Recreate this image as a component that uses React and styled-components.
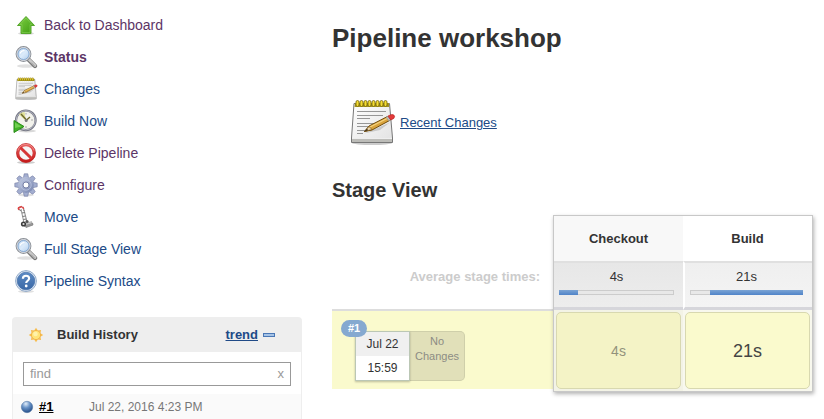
import React, { useId } from "react";
import styled, { createGlobalStyle } from "styled-components";

const GlobalStyle = createGlobalStyle`
  *, *::before, *::after { box-sizing: border-box; }
  body {
    margin: 0;
    background: #fff;
    color: #333;
    font-family: "Liberation Sans", Arial, Helvetica, sans-serif;
    font-size: 13px;
    line-height: 16px;
  }
`;

const Page = styled.div`
  display: grid;
  grid-template-columns: minmax(220px, 290px) minmax(0, 1fr);
  column-gap: 30px;
  padding: 9px 11px 0 12px;
`;

const Sidebar = styled.aside`
  display: flex;
  flex-direction: column;
  gap: 20px;
`;

const TaskList = styled.ul`
  list-style: none;
  margin: 0;
  padding: 0;
`;

const TaskLink = styled.a`
  display: flex;
  align-items: center;
  gap: 6px;
  height: 32px;
  padding-left: 2px;
  font-size: 14px;
  text-decoration: none;
  color: ${(p) => (p.$visited ? "#5c3566" : "#204a87")};
  font-weight: ${(p) => (p.$current ? "bold" : "normal")};
`;

const Icon = styled.svg`
  flex: none;
  display: block;
  width: ${(p) => p.$size}px;
  height: ${(p) => p.$size}px;
  overflow: visible;
`;

const History = styled.section`
  border: 1px solid #eee;
  border-bottom: 0;
  border-radius: 4px 4px 0 0;
`;

const HistoryHeader = styled.header`
  display: flex;
  align-items: center;
  height: 34px;
  padding: 0 26px 0 14px;
  background: #eee;
`;

const HistoryTitle = styled.h2`
  flex: 1;
  margin: 0 0 0 12px;
  font-size: 13px;
  line-height: 16px;
`;

const TrendLink = styled.a`
  color: #204a87;
  font-weight: bold;
`;

const CollapseButton = styled.button`
  width: 12px;
  height: 4px;
  margin-left: 5px;
  padding: 0;
  border: 1px solid #4a77b5;
  background: #a5c3e6;
`;

const SearchBox = styled.div`
  display: flex;
  align-items: center;
  height: 24px;
  margin: 10px 10px 8px;
  border: 1px solid #999;
`;

const SearchInput = styled.input`
  flex: 1;
  min-width: 0;
  padding: 0 6px;
  border: 0;
  outline: 0;
  background: none;
  font: inherit;
  &::placeholder { color: #999; opacity: 1; }
`;

const ClearButton = styled.button`
  padding: 0 6px;
  border: 0;
  background: none;
  color: #999;
  font: inherit;
`;

const BuildRow = styled.div`
  display: flex;
  align-items: center;
  height: 25px;
  padding-left: 8px;
  background: #fafafa;
`;

const BuildLink = styled.a`
  width: 56px;
  padding-left: 6px;
  color: #000;
  font-weight: bold;
`;

const BuildTime = styled.time`
  color: #777;
  font-size: 12px;
`;

const Main = styled.main`
  padding-top: 14px;
`;

const Title = styled.h1`
  margin: 0;
  font-size: 26px;
  line-height: 30px;
`;

const RecentChanges = styled.div`
  display: flex;
  align-items: center;
  gap: 4px;
  margin: 46px 0 31px 16px;
`;

const ChangesLink = styled.a`
  color: #204a87;
`;

const SectionTitle = styled.h2`
  margin: 0 0 13px;
  font-size: 20px;
  line-height: 24px;
`;

const StageView = styled.div`
  display: grid;
  grid-template-columns: minmax(150px, 1fr) 260px;
  align-items: start;
`;

const RunColumn = styled.div`
  display: grid;
  grid-template-rows: 94px 80px;
`;

const AverageLabel = styled.div`
  align-self: end;
  padding: 0 13px 24px;
  text-align: right;
  font-weight: bold;
  color: #ccc;
`;

const Run = styled.div`
  display: flex;
  align-items: flex-start;
  padding: 20px 0 0 23px;
  border-top: 2px solid #ddd;
  background: #fafacd;
`;

const RunCard = styled.div`
  position: relative;
  width: 55px;
  border: 1px solid #bbc7b5;
  background: #fff;
  box-shadow: 0 1px 2px rgba(0, 0, 0, 0.25);
  font-size: 12px;
  text-align: center;
`;

const RunBadge = styled.span`
  position: absolute;
  top: -12px;
  left: -15px;
  height: 17px;
  padding: 0 7px;
  border-radius: 9px;
  background: #85a9d0;
  color: #fff;
  font-size: 11px;
  font-weight: bold;
  line-height: 17px;
`;

const RunPart = styled.div`
  height: 24px;
  line-height: 24px;
  background: ${(p) => (p.$shaded ? "#f0f0f0" : "#fff")};
`;

const NoChanges = styled.div`
  width: 55px;
  height: 50px;
  padding-top: 2px;
  border: 1px solid #cfcfaa;
  border-left: 0;
  border-radius: 0 5px 5px 0;
  background: #e1e0b9;
  color: #8c8c84;
  font-size: 11px;
  line-height: 15px;
  text-align: center;
`;

const StageTable = styled.table`
  width: 100%;
  table-layout: fixed;
  border: 1px solid #c8c8c8;
  border-collapse: separate;
  border-spacing: 0;
  box-shadow: 1px 2px 4px rgba(0, 0, 0, 0.3);
  text-align: center;
`;

const StageHead = styled.th`
  height: 45px;
  padding: 0;
  background: ${(p) => (p.$shaded ? "#f8f8f8" : "#fff")};
`;

const AverageCell = styled.td`
  height: 49px;
  padding: 6px 9px 10px 5px;
  border-top: 2px solid #e0e0e0;
  border-bottom: 3px solid #d6d6db;
  border-left: ${(p) => (p.$shaded ? "0" : "2px solid #fff")};
  background: ${(p) =>
    p.$shaded
      ? "linear-gradient(#e7e7e7, #ededed)"
      : "linear-gradient(#efefef, #f4f4f4)"};
  vertical-align: top;
`;

const Track = styled.div`
  height: 5px;
  margin-top: 5px;
  border: 1px solid #ccc;
  background: #e8e8e8;
`;

const Share = styled.div`
  height: 5px;
  margin: -1px;
  margin-left: ${(p) => (p.$from ? `${p.$from}%` : "-1px")};
  width: ${(p) => p.$width}%;
  background: linear-gradient(#7ba4d4, #4f83c8);
`;

const RunCell = styled.td`
  height: 80px;
  padding: 2px;
  background: ${(p) => (p.$shaded ? "#f3f3e6" : "#f8f8ee")};
`;

const RunResult = styled.div`
  display: grid;
  place-items: center;
  height: 77px;
  border: 1px solid #d8d8b0;
  border-radius: 5px;
  background: ${(p) => (p.$shaded ? "#f4f3c6" : "#fafacd")};
  color: ${(p) => (p.$shaded ? "#92927c" : "#444")};
  font-size: ${(p) => (p.$shaded ? 14 : 18)}px;
`;

function UpArrow() {
  const id = useId();
  return (
    <Icon viewBox="0 0 24 24" $size={24} aria-hidden="true">
      <linearGradient id={id} x2="1" y2="1">
        <stop stopColor="#7fd044" /><stop offset="1" stopColor="#3c9a10" />
      </linearGradient>
      <ellipse cx="12" cy="20.500" rx="8" ry="1.500" fill="#000" opacity=".15" />
      <path d="M12 3.500 20.500 12.500H17V20.500H7V12.500H3.500Z" fill={`url(#${id})`} stroke="#56a62c" strokeLinejoin="round" />
      <path d="M12 5 18 11.500H16V19.500H8V11.500H6Z" fill="none" stroke="#8ed65e" strokeWidth=".5" />
    </Icon>
  );
}

function Magnifier() {
  const id = useId();
  return (
    <Icon viewBox="0 0 24 24" $size={24} aria-hidden="true">
      <linearGradient id={id} x2="1" y2="1">
        <stop stopColor="#b7d2ef" /><stop offset=".5" stopColor="#dcebfa" /><stop offset="1" stopColor="#a8c8ea" />
      </linearGradient>
      <ellipse cx="12" cy="21" rx="9" ry="1.800" fill="#000" opacity=".12" />
      <path d="m14.500 14.500 6.500 6.500" stroke="#777" strokeWidth="4.400" strokeLinecap="round" />
      <path d="m15 14.500 6 6" stroke="#c9c9c9" strokeWidth="2.600" strokeLinecap="round" />
      <path d="m17 17.500 3.500 3.500" stroke="#999" strokeWidth="1" />
      <circle cx="9.500" cy="9" r="7" fill={`url(#${id})`} stroke="#8a8f96" strokeWidth="1.800" />
      <circle cx="9.500" cy="9" r="6.500" fill="none" stroke="#e6e9ee" strokeWidth=".9" />
      <circle cx="9.500" cy="9" r="5.500" fill="none" stroke="#78a0cc" strokeWidth=".8" />
      <path d="M6 8.500Q7 5.500 10.500 5.500" fill="none" stroke="#fff" strokeWidth="1.200" />
    </Icon>
  );
}

function Notepad({ size }) {
  const id = useId();
  return (
    <Icon viewBox="0 0 48 48" $size={size} aria-hidden="true">
      <linearGradient id={id} x2="1" y2="1">
        <stop stopColor="#fff" /><stop offset="1" stopColor="#e2e2e2" />
      </linearGradient>
      <ellipse cx="24" cy="44" rx="20" ry="2" fill="#000" opacity=".2" />
      <path d="M6 4.500H41.500L44.500 39V43.500H3.500V39Z" fill={`url(#${id})`} stroke="#777" strokeLinejoin="round" />
      <path d="M4 39.500H44V43H4Z" fill="#bcbcb8" />
      <path d="M4 39.500H44" stroke="#eee" />
      <path d="M7 4H41V8H6.500Z" fill="#a39422" />
      {[9, 13, 17, 21, 25, 29, 33, 37].map((x) => (
        <rect key={x} x={x - 1} y="1.500" width="3" height="6" rx="1.500" fill="#f4dc32" stroke="#71620b" strokeWidth=".8" />
      ))}
      <path d="M9 12.500H38M9 16.500H35M9 19.500H22M9 24.500H30M9 27.500H24M9 31.500H17M9 34.500H15" stroke="#969696" />
      <path d="M16 34.500 32 31 42 23.500Z" fill="#000" opacity=".15" />
      <path d="M16.500 32.500 21 27 39.500 17.500 42.500 21 24 31Z" fill="#d9a33c" stroke="#704c0c" strokeLinejoin="round" />
      <path d="M22 28 40 19" stroke="#f4d27d" strokeWidth="1.300" />
      <path d="M16.500 32.500 21 27.500 24 30.500Z" fill="#ead4ac" stroke="#704c0c" strokeWidth=".6" />
      <path d="m16 32.800 3-3 1.200 1.500Z" fill="#3c2b12" />
      <path d="m38 18.200 2.800 3.800 2-1.100-2.900-3.700Z" fill="#bbb" stroke="#888" strokeWidth=".5" />
      <path d="m40 17 2.800 4 3-1.600Q47.500 17 45.500 15.800 43.500 14.800 40 17Z" fill="#e33b3b" stroke="#b22" strokeWidth=".7" />
    </Icon>
  );
}

function ClockPlay() {
  return (
    <Icon viewBox="0 0 24 24" $size={24} aria-hidden="true">
      <ellipse cx="13" cy="22" rx="9" ry="1.500" fill="#000" opacity=".15" />
      <circle cx="11.800" cy="11.300" r="9.800" fill="#f2f2ec" stroke="#777985" strokeWidth="2.200" />
      <circle cx="11.800" cy="11.300" r="9.600" fill="none" stroke="#b2b4c2" strokeWidth="1" />
      <path d="M12 12 5 5.500A9 9 0 0 1 10.500 3Z" fill="#dfe097" />
      <path d="m7 5 5 5.500M12 11.500l4-3.500" stroke="#6c682c" strokeWidth="1.400" />
      <circle cx="12.200" cy="11.500" r="1.500" fill="#777" />
      <path d="M17 11h2M12 17v2M12 4v1.500" stroke="#aaa" />
      <path d="M0 11.500 10 17.500 0 23.500Z" fill="#43b428" stroke="#288b18" strokeLinejoin="round" />
      <path d="M1 13.500 7.500 17.500 1 19Z" fill="#84dc62" opacity=".7" />
    </Icon>
  );
}

function NoEntry() {
  const id = useId();
  return (
    <Icon viewBox="0 0 24 24" $size={24} aria-hidden="true">
      <linearGradient id={id} x2="0" y2="1">
        <stop stopColor="#e86060" /><stop offset="1" stopColor="#c71c1c" />
      </linearGradient>
      <ellipse cx="12" cy="21.500" rx="9" ry="1.500" fill="#000" opacity=".2" />
      <circle cx="12" cy="12" r="8.200" fill="#f5f5f5" stroke={`url(#${id})`} strokeWidth="3" />
      <path d="m6.300 6.500 11.500 11.300" stroke="#d53636" strokeWidth="3" />
      <circle cx="12" cy="12" r="9.500" fill="none" stroke="#b92222" strokeWidth=".6" />
      <path d="M4 9.500A8.300 8.300 0 0 1 20 9.500" fill="none" stroke="#f39a9a" strokeWidth=".7" />
    </Icon>
  );
}

function Gear() {
  const id = useId();
  return (
    <Icon viewBox="0 0 24 24" $size={24} aria-hidden="true">
      <linearGradient id={id} x2="1" y2="1">
        <stop stopColor="#c7cfe4" /><stop offset="1" stopColor="#7482ad" />
      </linearGradient>
      <ellipse cx="12" cy="22" rx="8" ry="1.500" fill="#000" opacity=".12" />
      <g fill="#a3aed0" stroke="#7079a0" strokeWidth=".6">
        {[0, 45, 90, 135, 180, 225, 270, 315].map((a) => (
          <path key={a} d="M9.300 5.500 10.200 .8H13.800L14.700 5.500Z" transform={`rotate(${a} 12 12)`} />
        ))}
      </g>
      <circle cx="12" cy="12" r="7.900" fill={`url(#${id})`} />
      <circle cx="12" cy="12" r="5.200" fill="none" stroke="#b9c3e0" strokeWidth=".8" />
      <circle cx="12" cy="12" r="3" fill="#fff" stroke="#6d77a0" strokeWidth=".9" />
    </Icon>
  );
}

function HandTruck() {
  return (
    <Icon viewBox="0 0 24 24" $size={24} aria-hidden="true">
      <path d="M10 20.500 18.500 18 19 20 12 22.500Z" fill="#999" stroke="#777" strokeWidth=".7" />
      <path d="M10.500 19 17.500 16.500V18.500L11 20.500Z" fill="#ccc" stroke="#888" strokeWidth=".5" />
      <path d="m7 4 3 14M10 5l3 12" stroke="#999" strokeWidth="1.100" />
      <path d="m7.800 8 3.200-.5M8.500 11.500l3-.5M9.300 14.500l3-.5" stroke="#777" strokeWidth="1" />
      <path d="M7 6 5 4.500 4.500 2.500 8 1.500 9.500 3 10 6" fill="none" stroke="#777" strokeWidth="1" />
      <path d="m4 3 4-1.500M4 3l1 2M8.500 1.800l1.200 2" stroke="#df4545" strokeWidth="1.500" />
      <circle cx="9.500" cy="19" r="2.600" fill="#3c3c3c" /><circle cx="9.500" cy="19" r="1.100" fill="#ddd" />
      <circle cx="13" cy="16.500" r="1.600" fill="#555" />
    </Icon>
  );
}

function Help() {
  const id = useId();
  return (
    <Icon viewBox="0 0 24 24" $size={24} aria-hidden="true">
      <linearGradient id={id} x2="0" y2="1">
        <stop stopColor="#5d8bc4" /><stop offset="1" stopColor="#3a68a6" />
      </linearGradient>
      <ellipse cx="12" cy="22.500" rx="8" ry="1.500" fill="#000" opacity=".12" />
      <circle cx="12" cy="12" r="10.400" fill="#e9eff7" stroke="#7594bb" strokeWidth=".8" />
      <circle cx="12" cy="12" r="8.800" fill={`url(#${id})`} stroke="#4470a9" strokeWidth=".7" />
      <path d="M8.900 9.800C8.900 5.700 15.200 5.900 15.100 9.500 15 11.700 12.200 11.800 12.200 14" fill="none" stroke="#fff" strokeWidth="2.200" />
      <circle cx="12.200" cy="17" r="1.400" fill="#fff" />
    </Icon>
  );
}

function Sun() {
  return (
    <Icon viewBox="0 0 18 18" $size={18} aria-hidden="true">
      {[0, 45, 90, 135, 180, 225, 270, 315].map((a) => (
        <path key={a} d="M7.200 4.500 9 1.800 10.800 4.500Z" fill="#f7bd50" transform={`rotate(${a} 9 9)`} />
      ))}
      <circle cx="9" cy="9" r="4.600" fill="#ffe478" stroke="#f2b448" />
      <circle cx="8.500" cy="8" r="2.300" fill="#fff2aa" />
    </Icon>
  );
}

function BlueBall() {
  const id = useId();
  return (
    <Icon viewBox="0 0 12 12" $size={12} role="img" aria-label="Success">
      <radialGradient id={id} cx=".4" cy=".22" r=".8">
        <stop stopColor="#e1edf9" /><stop offset=".45" stopColor="#6691c6" /><stop offset="1" stopColor="#234c86" />
      </radialGradient>
      <circle cx="6" cy="6" r="5.700" fill={`url(#${id})`} stroke="#496f9f" strokeWidth=".5" />
    </Icon>
  );
}

const tasks = [
  { label: "Back to Dashboard", icon: <UpArrow />, visited: true },
  { label: "Status", icon: <Magnifier />, visited: true, current: true },
  { label: "Changes", icon: <Notepad size={24} /> },
  { label: "Build Now", icon: <ClockPlay /> },
  { label: "Delete Pipeline", icon: <NoEntry />, visited: true },
  { label: "Configure", icon: <Gear />, visited: true },
  { label: "Move", icon: <HandTruck /> },
  { label: "Full Stage View", icon: <Magnifier /> },
  { label: "Pipeline Syntax", icon: <Help /> },
];

const stages = [
  { name: "Checkout", average: "4s", result: "4s", from: 0, width: 17, shaded: true },
  { name: "Build", average: "21s", result: "21s", from: 17, width: 84, shaded: false },
];

export default function App() {
  return (
    <>
      <GlobalStyle />
      <Page>
        <Sidebar>
          <nav aria-label="Pipeline">
            <TaskList>
              {tasks.map((t) => (
                <li key={t.label}>
                  <TaskLink href="#" $visited={t.visited} $current={t.current} aria-current={t.current ? "page" : undefined}>
                    {t.icon}
                    {t.label}
                  </TaskLink>
                </li>
              ))}
            </TaskList>
          </nav>
          <History>
            <HistoryHeader>
              <Sun />
              <HistoryTitle>Build History</HistoryTitle>
              <TrendLink href="#">trend</TrendLink>
              <CollapseButton type="button" aria-label="Collapse" />
            </HistoryHeader>
            <SearchBox>
              <SearchInput type="text" placeholder="find" aria-label="Find builds" />
              <ClearButton type="button" aria-label="Clear">x</ClearButton>
            </SearchBox>
            <BuildRow>
              <BlueBall />
              <BuildLink href="#">#1</BuildLink>
              <BuildTime>Jul 22, 2016 4:23 PM</BuildTime>
            </BuildRow>
          </History>
        </Sidebar>
        <Main>
          <Title>Pipeline workshop</Title>
          <RecentChanges>
            <Notepad size={48} />
            <ChangesLink href="#">Recent Changes</ChangesLink>
          </RecentChanges>
          <SectionTitle>Stage View</SectionTitle>
          <StageView>
            <RunColumn>
              <AverageLabel>Average stage times:</AverageLabel>
              <Run>
                <RunCard>
                  <RunPart $shaded>Jul 22</RunPart>
                  <RunPart>15:59</RunPart>
                  <RunBadge>#1</RunBadge>
                </RunCard>
                <NoChanges>No Changes</NoChanges>
              </Run>
            </RunColumn>
            <StageTable>
              <thead>
                <tr>
                  {stages.map((s) => (
                    <StageHead key={s.name} scope="col" $shaded={s.shaded}>{s.name}</StageHead>
                  ))}
                </tr>
              </thead>
              <tbody>
                <tr>
                  {stages.map((s) => (
                    <AverageCell key={s.name} $shaded={s.shaded}>
                      {s.average}
                      <Track><Share $from={s.from} $width={s.width} /></Track>
                    </AverageCell>
                  ))}
                </tr>
                <tr>
                  {stages.map((s) => (
                    <RunCell key={s.name} $shaded={s.shaded}>
                      <RunResult $shaded={s.shaded}>{s.result}</RunResult>
                    </RunCell>
                  ))}
                </tr>
              </tbody>
            </StageTable>
          </StageView>
        </Main>
      </Page>
    </>
  );
}
